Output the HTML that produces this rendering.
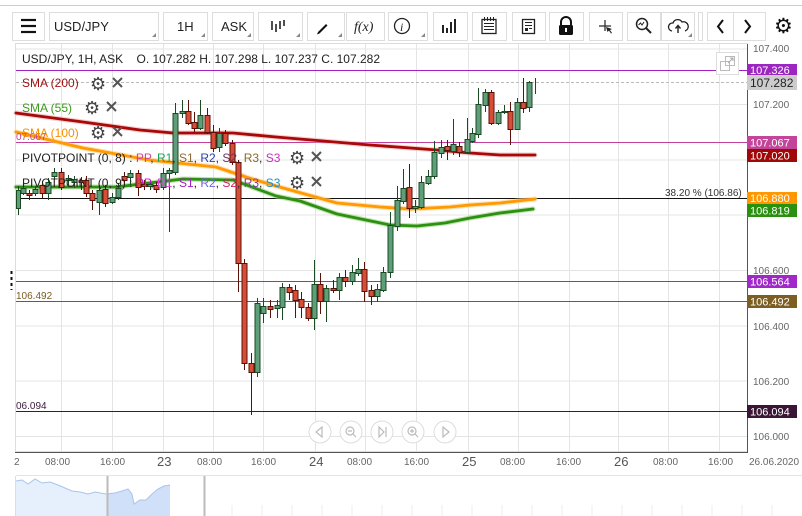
<!DOCTYPE html>
<html><head><meta charset="utf-8"><style>
html,body{margin:0;padding:0;background:#fff;width:802px;height:516px;overflow:hidden}
svg{display:block;font-family:"Liberation Sans",sans-serif}
</style></head><body>
<svg width="802" height="516" viewBox="0 0 802 516" xmlns="http://www.w3.org/2000/svg">
<line x1="0" y1="5.5" x2="802" y2="5.5" stroke="#ccc"/>
<g fill="#fff" stroke="#ddd">
<rect x="12.5" y="12.5" width="32" height="28"/>
<rect x="49.5" y="12.5" width="109" height="28"/>
<rect x="163.5" y="12.5" width="44" height="28"/>
<rect x="212.5" y="12.5" width="41" height="28"/>
<rect x="258.5" y="12.5" width="44" height="28"/>
<rect x="307.5" y="12.5" width="37" height="28"/>
<rect x="346.5" y="12.5" width="38" height="28"/>
<rect x="388.5" y="12.5" width="39" height="28"/>
<rect x="433.5" y="12.5" width="34" height="28"/>
<rect x="472.5" y="12.5" width="34" height="28"/>
<rect x="512.5" y="12.5" width="33" height="28"/>
<rect x="549.5" y="12.5" width="34" height="28"/>
<rect x="589.5" y="12.5" width="33" height="28"/>
<rect x="627.5" y="12.5" width="33" height="28"/>
<rect x="661.5" y="12.5" width="33" height="28"/>
<rect x="698.5" y="12.5" width="4" height="28"/>
<rect x="707.5" y="12.5" width="58" height="28"/>
</g>
<line x1="733.5" y1="12" x2="733.5" y2="41" stroke="#ddd"/>
<g fill="#888">
<path d="M152 37h4v-4z"/><path d="M201 37h4v-4z"/><path d="M247 37h4v-4z"/><path d="M296 37h4v-4z"/><path d="M338 37h4v-4z"/><path d="M421 37h4v-4z"/><path d="M688 37h4v-4z"/>
</g>
<g stroke="#111" stroke-width="2.2"><line x1="21" y1="20" x2="36" y2="20"/><line x1="21" y1="26" x2="36" y2="26"/><line x1="21" y1="32" x2="36" y2="32"/></g>
<g font-size="13" fill="#222">
<text x="54" y="31">USD/JPY</text>
<text x="177" y="31">1H</text>
<text x="221" y="31">ASK</text>
<text x="354" y="31" font-family="Liberation Serif" font-style="italic" font-size="14">f(x)</text>
</g>
<g stroke="#222" stroke-width="1.6"><line x1="272" y1="21" x2="272" y2="30"/><line x1="276" y1="24" x2="276" y2="32"/><line x1="280" y1="21" x2="280" y2="29"/><line x1="284" y1="20" x2="284" y2="26"/></g>
<path d="M318 32l8-8 1.5 1.5-8 8-2.5 1z" fill="#111"/>
<circle cx="402" cy="26" r="7.5" fill="none" stroke="#222" stroke-width="1.3"/><text x="400" y="31" font-size="12" font-family="Liberation Serif" font-style="italic" fill="#222">i</text>
<g fill="#222"><rect x="442" y="25" width="2" height="8"/><rect x="446" y="28" width="2" height="5"/><rect x="450" y="22" width="2" height="11"/><rect x="454" y="19" width="2" height="14"/></g>
<rect x="482" y="19.5" width="14" height="14" fill="none" stroke="#222" stroke-width="1.3"/><g fill="#222"><rect x="484" y="17" width="1" height="4"/><rect x="487" y="17" width="1" height="4"/><rect x="490" y="17" width="1" height="4"/><rect x="493" y="17" width="1" height="4"/><rect x="484" y="23" width="10" height="1"/><rect x="484" y="26" width="10" height="1"/><rect x="484" y="29" width="10" height="1"/></g>
<rect x="522.5" y="19.5" width="12" height="14" fill="none" stroke="#222" stroke-width="1.3"/><g fill="#222"><rect x="525" y="22" width="7" height="1"/><rect x="525" y="25" width="7" height="1"/><rect x="525" y="28" width="3" height="3"/><rect x="529" y="28" width="3" height="1"/></g>
<path d="M561 25v-3a5 5 0 0 1 10 0v3" fill="none" stroke="#111" stroke-width="2"/><rect x="559" y="25" width="14" height="10" rx="1.5" fill="#111"/><rect x="565" y="28" width="2" height="4" fill="#fff"/>
<g stroke="#222" stroke-width="1.2"><line x1="605" y1="20" x2="605" y2="31"/><line x1="599" y1="26" x2="611" y2="26"/></g><path d="M606 27l6 2-2 1 2 3-1 .5-2-3-1.5 1.5z" fill="#222"/>
<circle cx="642" cy="24" r="5.5" fill="none" stroke="#222" stroke-width="1.5"/><line x1="646" y1="28" x2="651" y2="33" stroke="#222" stroke-width="2"/><path d="M638.5 25l2-2 1.5 2 2-3" fill="none" stroke="#222" stroke-width="1"/>
<path d="M672 31a4 4 0 0 1 1-8 5 5 0 0 1 9-1 4 4 0 0 1 3 9" fill="none" stroke="#222" stroke-width="1.3"/><path d="M678 33v-7m-2.5 2.5l2.5-3 2.5 3" fill="none" stroke="#222" stroke-width="1.4"/>
<path d="M723 20l-5 6.5 5 6.5M745 20l5 6.5-5 6.5" fill="none" stroke="#111" stroke-width="2"/>
<text x="774" y="33" font-size="21" fill="#111" font-family="DejaVu Sans">⚙</text>

<rect x="15.5" y="43.5" width="732" height="408" fill="#fff" stroke="#ddd"/>
<g stroke="#e4e4e4">
<line x1="16" y1="49" x2="747" y2="49"/><line x1="16" y1="104.5" x2="747" y2="104.5"/><line x1="16" y1="160" x2="747" y2="160"/><line x1="16" y1="215" x2="747" y2="215"/><line x1="16" y1="270.5" x2="747" y2="270.5"/><line x1="16" y1="326" x2="747" y2="326"/><line x1="16" y1="381" x2="747" y2="381"/><line x1="16" y1="436.5" x2="747" y2="436.5"/>
<line x1="61.5" y1="44" x2="61.5" y2="451"/><line x1="112.5" y1="44" x2="112.5" y2="451"/><line x1="163.5" y1="44" x2="163.5" y2="451"/><line x1="213.5" y1="44" x2="213.5" y2="451"/><line x1="263.5" y1="44" x2="263.5" y2="451"/><line x1="315.5" y1="44" x2="315.5" y2="451"/><line x1="365.5" y1="44" x2="365.5" y2="451"/><line x1="416.5" y1="44" x2="416.5" y2="451"/><line x1="468.5" y1="44" x2="468.5" y2="451"/><line x1="518.5" y1="44" x2="518.5" y2="451"/><line x1="569.5" y1="44" x2="569.5" y2="451"/><line x1="618.5" y1="44" x2="618.5" y2="451"/><line x1="668.5" y1="44" x2="668.5" y2="451"/><line x1="719.5" y1="44" x2="719.5" y2="451"/>
</g>
<line x1="747.5" y1="44" x2="747.5" y2="452" stroke="#555"/>
<line x1="15" y1="452.5" x2="748" y2="452.5" stroke="#555"/>
<line x1="16" y1="70.5" x2="747" y2="70.5" stroke="#a020c0"/>
<line x1="16" y1="82.5" x2="747" y2="82.5" stroke="#bbb" stroke-dasharray="3,2"/>
<line x1="16" y1="142.5" x2="747" y2="142.5" stroke="#c0409a"/>
<line x1="16" y1="198.5" x2="747" y2="198.5" stroke="#111"/>
<line x1="16" y1="281.5" x2="747" y2="281.5" stroke="#9a30b8"/>
<line x1="16" y1="301.5" x2="747" y2="301.5" stroke="#7a5c22"/>
<line x1="16" y1="411.5" x2="747" y2="411.5" stroke="#3a1a3a"/>
<g fill="none" stroke-linejoin="round" stroke-linecap="round">
<path d="M16 113 L83 122 L140 130 L173 133 L233 133 L276 137 L370 145 L437 150 L470 153 L500 155 L535 155" stroke="#e8a0a0" stroke-width="5" opacity=".5"/>
<path d="M16 113 L83 122 L140 130 L173 133 L233 133 L276 137 L370 145 L437 150 L470 153 L500 155 L535 155" stroke="#a80808" stroke-width="2.8"/>
<path d="M16 132 L83 148 L149 160 L216 167 L249 178 L276 186 L337 203 L380 207 L410 209 L450 207 L470 205 L500 203 L535 199" stroke="#ffcc80" stroke-width="5" opacity=".6"/>
<path d="M16 132 L83 148 L149 160 L216 167 L249 178 L276 186 L337 203 L380 207 L410 209 L450 207 L470 205 L500 203 L535 199" stroke="#ff9a00" stroke-width="2.8"/>
<path d="M16 187 L116 187 L183 179 L233 180 L276 196 L300 201 L337 214 L390 225 L417 226 L445 223 L470 218 L500 213 L533 209" stroke="#9ad080" stroke-width="5" opacity=".6"/>
<path d="M16 187 L116 187 L183 179 L233 180 L276 196 L300 201 L337 214 L390 225 L417 226 L445 223 L470 218 L500 213 L533 209" stroke="#2c9010" stroke-width="2.8"/>
</g>
<g stroke-width="1">
<g stroke="#1a4a22" fill="#5f9e7a">
<path d="M18.5 186v29M23.5 185v10M35.5 186v10M48.5 178v22M54.5 168v12M68.5 175v11M74.5 176v12M99.5 185v30M112.5 193v11M118.5 183v17M130.5 170v15M150.5 180v10M163.5 168v22M169.5 168v64M175.5 103v72M182.5 100v18M200.5 100v30M219.5 128v24M257.5 298v79M263.5 298v25M277.5 300v18M282.5 283v37M314.5 260v70M326.5 285v37M339.5 273v27M352.5 265v20M358.5 258v18M377.5 284v18M383.5 267v25M390.5 212v66M397.5 186v45M403.5 169v35M415.5 200v13M421.5 176v33M428.5 170v15M434.5 141v38M441.5 140v18M453.5 119v36M467.5 118v36M472.5 128v15M478.5 88v50M485.5 89v23M498.5 110v15M504.5 105v9M517.5 98v32M529.5 81v31M535.5 78v16"/>
<rect x="16.5" y="190.5" width="4" height="18"/><rect x="21" y="188.5" width="5" height="5"/><rect x="33" y="189.5" width="5" height="4"/><rect x="46" y="182.5" width="5" height="11"/><rect x="52" y="172.5" width="5" height="4"/><rect x="66" y="178.5" width="5" height="2"/><rect x="72" y="179.5" width="5" height="3"/><rect x="97" y="190.5" width="5" height="12"/><rect x="110" y="197.5" width="5" height="5"/><rect x="116" y="188.5" width="5" height="9"/><rect x="128" y="173.5" width="5" height="4"/><rect x="148" y="184.5" width="5" height="2"/><rect x="161" y="173.5" width="5" height="14"/><rect x="167" y="170.5" width="5" height="3"/><rect x="173" y="113.5" width="5" height="59"/><rect x="180" y="111.5" width="5" height="2"/><rect x="198" y="115.5" width="5" height="13"/><rect x="217" y="133.5" width="5" height="14"/><rect x="255" y="303.5" width="5" height="69"/><rect x="261" y="306.5" width="5" height="7"/><rect x="275" y="305.5" width="5" height="3"/><rect x="280" y="287.5" width="5" height="20"/><rect x="312" y="284.5" width="5" height="34"/><rect x="324" y="288.5" width="5" height="13"/><rect x="337" y="277.5" width="5" height="13"/><rect x="350" y="272.5" width="5" height="9"/><rect x="356" y="269.5" width="5" height="4"/><rect x="375" y="289.5" width="5" height="7"/><rect x="381" y="272.5" width="5" height="18"/><rect x="388" y="225.5" width="5" height="47"/><rect x="395" y="200.5" width="5" height="26"/><rect x="401" y="188.5" width="5" height="13"/><rect x="413" y="206.5" width="5" height="2"/><rect x="419" y="182.5" width="5" height="25"/><rect x="426" y="176.5" width="5" height="7"/><rect x="432" y="152.5" width="5" height="24"/><rect x="439" y="147.5" width="5" height="6"/><rect x="451" y="144.5" width="5" height="7"/><rect x="465" y="139.5" width="5" height="13"/><rect x="470" y="133.5" width="5" height="8"/><rect x="476" y="104.5" width="5" height="30"/><rect x="483" y="92.5" width="5" height="13"/><rect x="496" y="112.5" width="5" height="11"/><rect x="502" y="111.5" width="5" height="1"/><rect x="515" y="102.5" width="5" height="27"/><rect x="527" y="82.5" width="5" height="25"/>
</g>
<g stroke="#5a1208" fill="#d84d38">
<path d="M29.5 190v10M42.5 181v17M61.5 168v22M81.5 177v13M86.5 176v21M92.5 190v20M105.5 185v22M124.5 172v13M138.5 170v26M144.5 180v10M156.5 182v11M188.5 100v25M194.5 112v20M207.5 108v26M213.5 125v27M225.5 130v16M232.5 140v25M238.5 160v132M244.5 259v111M251.5 353v62M270.5 300v18M289.5 284v16M295.5 285v33M301.5 292v26M308.5 303v18M320.5 273v41M333.5 280v13M345.5 270v17M364.5 262v40M371.5 285v20M409.5 164v54M447.5 140v20M459.5 142v15M491.5 90v35M510.5 102v43M523.5 78v35"/>
<rect x="27" y="193.5" width="5" height="2"/><rect x="40" y="185.5" width="5" height="8"/><rect x="59" y="172.5" width="5" height="15"/><rect x="79" y="180.5" width="5" height="2"/><rect x="84" y="180.5" width="5" height="13"/><rect x="90" y="193.5" width="5" height="7"/><rect x="103" y="189.5" width="5" height="14"/><rect x="122" y="176.5" width="5" height="4"/><rect x="136" y="173.5" width="5" height="14"/><rect x="142" y="184.5" width="5" height="2"/><rect x="154" y="185.5" width="5" height="4"/><rect x="186" y="111.5" width="5" height="12"/><rect x="192" y="122.5" width="5" height="6"/><rect x="205" y="115.5" width="5" height="17"/><rect x="211" y="132.5" width="5" height="16"/><rect x="223" y="133.5" width="5" height="10"/><rect x="230" y="143.5" width="5" height="19"/><rect x="236" y="162.5" width="5" height="101"/><rect x="242" y="263.5" width="5" height="100"/><rect x="249" y="363.5" width="5" height="9"/><rect x="268" y="306.5" width="5" height="3"/><rect x="287" y="287.5" width="5" height="5"/><rect x="293" y="290.5" width="5" height="10"/><rect x="299" y="299.5" width="5" height="8"/><rect x="306" y="307.5" width="5" height="11"/><rect x="318" y="284.5" width="5" height="17"/><rect x="331" y="288.5" width="5" height="2"/><rect x="343" y="277.5" width="5" height="4"/><rect x="362" y="269.5" width="5" height="22"/><rect x="369" y="290.5" width="5" height="6"/><rect x="407" y="187.5" width="5" height="21"/><rect x="445" y="146.5" width="5" height="4"/><rect x="457" y="146.5" width="5" height="6"/><rect x="489" y="92.5" width="5" height="31"/><rect x="508" y="111.5" width="5" height="18"/><rect x="521" y="102.5" width="5" height="6"/>
</g>
</g>
<g font-size="10">
<text x="16" y="140" fill="#c0409a">07.067</text>
<text x="16" y="299" fill="#7a5c22">106.492</text>
<text x="16" y="409" fill="#3a1a3a">06.094</text>
</g>
<line x1="11.5" y1="271" x2="11.5" y2="290" stroke="#111" stroke-width="2" stroke-dasharray="3,3"/>
<g font-size="12">
<text x="22" y="63" fill="#222" xml:space="preserve">USD/JPY, 1H, ASK    O. 107.282 H. 107.298 L. 107.237 C. 107.282</text>
<text x="22" y="87" fill="#a01010">SMA (200)</text>
<text x="22" y="112" fill="#3a9a1a">SMA (55)</text>
<text x="22" y="137" fill="#f59000">SMA (100)</text>
<text x="22" y="162" fill="#222">PIVOTPOINT (0, 8)   : <tspan fill="#d040a0">PP</tspan>, <tspan fill="#20a060">R1</tspan>, <tspan fill="#8a6a30">S1</tspan>, <tspan fill="#3040b0">R2</tspan>, <tspan fill="#703060">S2</tspan>, <tspan fill="#8a6a30">R3</tspan>, <tspan fill="#c030c0">S3</tspan></text>
<text x="22" y="187" fill="#222">PIVOTPOINT (0, 9)   : <tspan fill="#c020d0">PP</tspan>, <tspan fill="#e040e0">R1</tspan>, <tspan fill="#a020c0">S1</tspan>, <tspan fill="#7060e0">R2</tspan>, <tspan fill="#d02060">S2</tspan>, <tspan fill="#8040a0">R3</tspan>, <tspan fill="#2090c0">S3</tspan></text>
</g>
<g font-size="18" fill="#444" font-family="DejaVu Sans">
<text x="90" y="90">⚙</text><text x="84" y="114">⚙</text><text x="90" y="139">⚙</text><text x="289" y="164">⚙</text><text x="289" y="189">⚙</text>
</g>
<g stroke="#555" stroke-width="2">
<path d="M113 78l9 9M122 78l-9 9M107 102l9 9M116 102l-9 9M113 127l9 9M122 127l-9 9M312 152l9 9M321 152l-9 9M312 177l9 9M321 177l-9 9"/>
</g>
<text x="665" y="196" font-size="10" fill="#333">38.20 % (106.86)</text>
<rect x="716.5" y="52.5" width="22" height="22" fill="#fff" stroke="#ddd"/>
<rect x="720.5" y="61.5" width="9" height="9" fill="none" stroke="#bbb"/><rect x="725.5" y="56.5" width="9" height="9" fill="none" stroke="#bbb"/><path d="M728 63l5-5m-3 0h3v3" fill="none" stroke="#aaa"/>
<g font-size="10" fill="#666">
<text x="753" y="52">107.400</text><text x="753" y="108">107.200</text><text x="753" y="274">106.600</text><text x="753" y="330">106.400</text><text x="753" y="385">106.200</text><text x="753" y="440">106.000</text>
</g>
<g font-size="11" fill="#fff">
<rect x="747" y="64" width="50" height="12" fill="#9c27c0"/><text x="750" y="74">107.326</text>
<rect x="747" y="75" width="50" height="15" fill="#ccc"/><text x="750" y="87" fill="#222" font-size="12">107.282</text>
<rect x="747" y="136" width="50" height="13" fill="#c2459a"/><text x="750" y="146.5">107.067</text>
<rect x="747" y="149" width="50" height="13" fill="#a00808"/><text x="750" y="159.5">107.020</text>
<rect x="747" y="192" width="50" height="12" fill="#ff9800"/><text x="750" y="202">106.880</text>
<rect x="747" y="204" width="50" height="13" fill="#2a9010"/><text x="750" y="214.5">106.819</text>
<rect x="747" y="275" width="50" height="13" fill="#a028c8"/><text x="750" y="285.5">106.564</text>
<rect x="747" y="295" width="50" height="13" fill="#7d5e22"/><text x="750" y="305.5">106.492</text>
<rect x="747" y="405" width="50" height="13" fill="#3a1535"/><text x="750" y="415.5">106.094</text>
</g>
<g fill="#fff" stroke="#ddd">
<circle cx="320" cy="432" r="11"/><circle cx="351" cy="432" r="11"/><circle cx="382" cy="432" r="11"/><circle cx="413" cy="432" r="11"/><circle cx="445" cy="432" r="11"/>
</g>
<g fill="none" stroke="#bbb" stroke-width="1.2">
<path d="M322 427l-6 5 6 5z"/><circle cx="350" cy="431" r="4"/><path d="M348 431h4M353 434l3 3"/>
<path d="M379 427l5 5-5 5zM386 427v10"/><circle cx="412" cy="431" r="4"/><path d="M410 431h4M412 429v4M415 434l3 3"/><path d="M443 427l6 5-6 5z"/>
</g>
<g font-size="10" fill="#666">
<text x="14" y="465">2</text><text x="45" y="465">08:00</text><text x="100" y="465">16:00</text>
<text x="197" y="465">08:00</text><text x="251" y="465">16:00</text>
<text x="347" y="465">08:00</text><text x="404" y="465">16:00</text>
<text x="500" y="465">08:00</text><text x="556" y="465">16:00</text>
<text x="653" y="465">08:00</text><text x="708" y="465">16:00</text><text x="749" y="465">26.06.2020</text>
</g>
<g font-size="13" fill="#555">
<text x="157" y="466">23</text><text x="309" y="466">24</text><text x="462" y="466">25</text><text x="614" y="466">26</text>
</g>
<line x1="16" y1="475.5" x2="802" y2="475.5" stroke="#e4e4e4"/>
<path d="M16 481 L22 480 L28 484 L35 479 L42 483 L50 482 L58 485 L65 488 L72 491 L80 492 L88 494 L95 492 L106 494 L107 494 L107 516 L16 516Z" fill="#e6effc"/>
<path d="M107 494 L115 493 L122 491 L128 489 L132 494 L134 504 L140 500 L146 500 L152 494 L158 489 L164 486 L170 485 L170 516 L107 516Z" fill="#cfe0f8"/>
<path d="M16 481 L22 480 L28 484 L35 479 L42 483 L50 482 L58 485 L65 488 L72 491 L80 492 L88 494 L95 492 L106 494 L115 493 L122 491 L128 489 L132 494 L134 504 L140 500 L146 500 L152 494 L158 489 L164 486 L170 485" fill="none" stroke="#a8c4ee"/>
<line x1="107.5" y1="476" x2="107.5" y2="516" stroke="#bbb" stroke-width="2"/>
<line x1="204.5" y1="476" x2="204.5" y2="516" stroke="#bbb" stroke-width="2"/>
<line x1="15.5" y1="476" x2="15.5" y2="516" stroke="#ddd"/>
<g stroke="#eee"><path d="M232 505v11M262 505v11M292 505v11M322 505v11M352 505v11M382 505v11M412 505v11M442 505v11M472 505v11M502 505v11M532 505v11M562 505v11M592 505v11M622 505v11M652 505v11M682 505v11M712 505v11M742 505v11M772 505v11"/></g>
</svg>
</body></html>
